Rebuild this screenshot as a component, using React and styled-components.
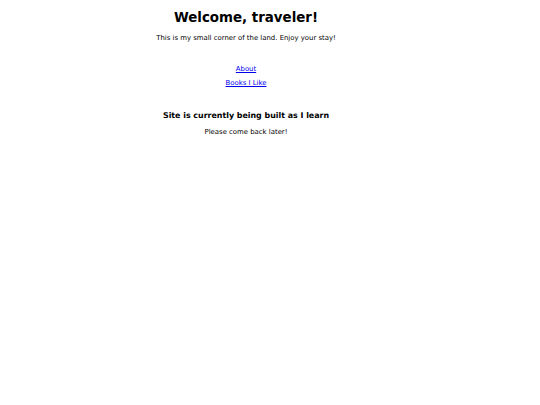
import styled, { createGlobalStyle } from "styled-components";

const GlobalStyle = createGlobalStyle`
  html, body {
    margin: 0;
    background: #fff;
  }
  body {
    font-family: "DejaVu Sans", Verdana, sans-serif;
    color: #000;
  }
`;

const Page = styled.main`
  width: 492px;
  padding-top: 0.1px;
  text-align: center;
`;

const Title = styled.h1`
  font-size: 13.4px;
  font-weight: bold;
  margin: 10px 0 9px;
`;

const Text = styled.p`
  font-size: 6.9px;
  margin: ${(p) => p.$top || "6.9px"} 0 6.9px;
`;

const Nav = styled.nav`
  margin: 22.5px 0 24px;
`;

const NavLink = styled.a`
  display: block;
  font-size: 6.9px;
  color: #0000ee;
  text-decoration: underline;
  margin: 0 0 6.7px;
`;

const Heading = styled.h3`
  font-size: 7.9px;
  font-weight: bold;
  margin: 8px 0 7.4px;
`;

export default function App() {
  return (
    <>
      <GlobalStyle />
      <Page>
        <Title>Welcome, traveler!</Title>
        <Text>This is my small corner of the land. Enjoy your stay!</Text>
        <Nav>
          <NavLink href="#">About</NavLink>
          <NavLink href="#">Books I Like</NavLink>
        </Nav>
        <Heading>Site is currently being built as I learn</Heading>
        <Text $top="7.4px">Please come back later!</Text>
      </Page>
    </>
  );
}
